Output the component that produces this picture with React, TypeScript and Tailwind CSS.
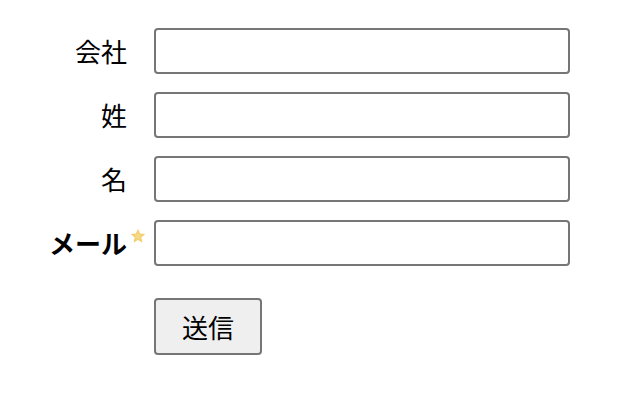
import React from 'react'

const labels = [
  { text: '会社' },
  { text: '姓' },
  { text: '名' },
  { text: 'メール', required: true },
]

function Star() {
  return (
    <svg width="18" height="18" viewBox="0 0 24 24" className="absolute left-[2px] top-[-16px]">
      <defs>
        <radialGradient id="sg" cx="50%" cy="55%" r="55%">
          <stop offset="0%" stopColor="#f6dc94" />
          <stop offset="100%" stopColor="#f1c652" />
        </radialGradient>
      </defs>
      <path d="M12 2.5l2.9 6.1 6.6.8-4.9 4.6 1.3 6.6L12 17.3l-5.9 3.3 1.3-6.6-4.9-4.6 6.6-.8z" fill="url(#sg)" />
    </svg>
  )
}

export default function App() {
  return (
    <div className="w-[622px] h-[398px] bg-white pt-[28px] font-['Noto_Sans_CJK_JP',sans-serif] text-black">
      <div className="grid grid-cols-[127px_416px] gap-x-[27px] gap-y-[18px]">
        {labels.map((l) => (
          <React.Fragment key={l.text}>
            <label className={`flex items-center justify-end text-[26px] leading-none ${l.required ? 'font-bold' : ''}`}>
              <span className="relative">
                {l.text}
                {l.required && (
                  <span className="absolute left-full top-1/2">
                    <Star />
                  </span>
                )}
              </span>
            </label>
            <input className="h-[46px] rounded-[4px] border-2 border-[#767676] bg-white px-2 outline-none" />
          </React.Fragment>
        ))}
        <div />
        <div className="pt-[14px]">
          <button className="h-[57px] w-[108px] rounded-[4px] border-2 border-[#767676] bg-[#efefef] text-[26px] leading-none">
            送信
          </button>
        </div>
      </div>
    </div>
  )
}
